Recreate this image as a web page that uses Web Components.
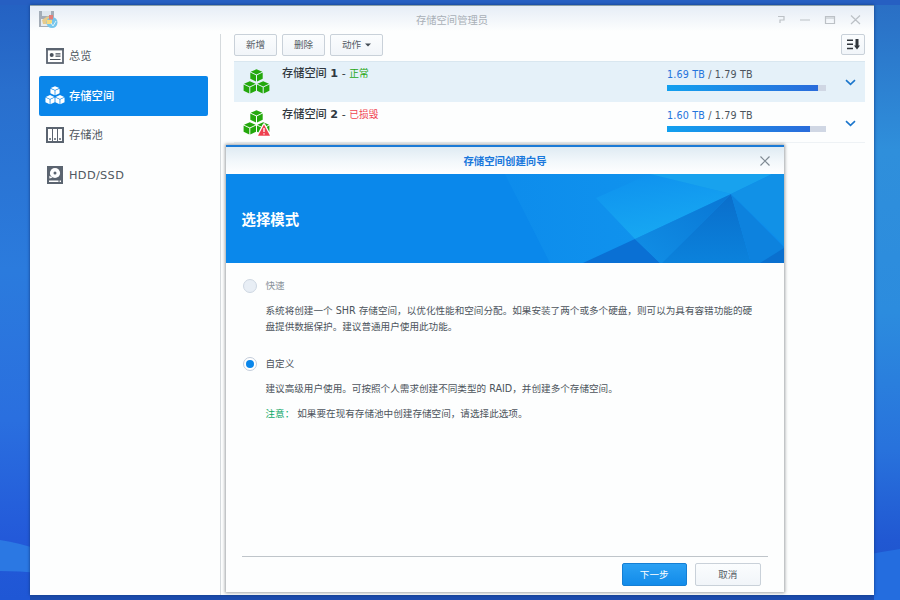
<!DOCTYPE html>
<html lang="zh-CN">
<head>
<meta charset="utf-8">
<title>存储空间管理员</title>
<style>
html,body{margin:0;height:100%;overflow:hidden}
body{font-family:"DejaVu Sans","Noto Sans CJK SC",sans-serif;font-size:9.6px;color:#4c545c;line-height:16px;white-space:nowrap}
</style>
</head>
<body>
<storage-desktop></storage-desktop>
<script>
function define(name, html){
  const t = document.createElement('template');
  t.innerHTML = html;
  customElements.define(name, class extends HTMLElement{
    constructor(){
      super();
      this.attachShadow({mode:'open'}).append(t.content.cloneNode(true));
    }
  });
}
const cube = 'd="M13.5 .2 19.3 2.7 13.5 5.4 7.7 2.7ZM7.3 3.6 13 6.2V12.6L7.3 9.8ZM19.7 3.6 14 6.2V12.6L19.7 9.8Z"';
const cubes = `<g fill="currentColor"><path ${cube}/><path transform="translate(-6.7 12)" ${cube}/><path transform="translate(6.7 12)" ${cube}/></g>`;

const icons = {
  overview:`<svg width="18" height="16" viewBox="0 0 18 16"><rect x="1" y="1" width="16" height="14" fill="#fff" stroke="#5b6470" stroke-width="1.8"/><path d="M0 1.2H18" stroke="#5b6470" stroke-width="2.4"/><circle cx="5.7" cy="7" r="2" fill="#4a525c"/><path d="M9.5 5.8H14.5M9.5 8.2H14.5M4 11.5H14.5" stroke="#4a525c" stroke-width="1.2"/></svg>`,
  volume:`<svg width="20" height="18.5" viewBox="0 0 27 25">${cubes}</svg>`,
  pool:`<svg width="18" height="16" viewBox="0 0 18 16"><path d="M0 0H18V16H0Z" fill="#5b6470"/><path d="M2 2H6V14H2ZM7 2H11V14H7ZM12 2H16V14H12Z" fill="#fff"/><path d="M4 11V13M9 11V13M14 11V13" stroke="#5b6470" stroke-width="1.5"/></svg>`,
  disk:`<svg width="18" height="18" viewBox="0 0 18 18"><path d="M1 0H17V18H1Z" fill="#5b6470"/><circle cx="9" cy="7" r="5.1" fill="#fff"/><circle cx="9" cy="7" r="1.5" fill="#5b6470"/><path d="M3.4 9.8 6.6 11.8 3.4 12.6Z" fill="#fff"/><path d="M3 15.2H12.5M13.6 15.2H15" stroke="#fff" stroke-width="1.6"/></svg>`
};
customElements.define('nav-item', class extends HTMLElement{
  constructor(){
    super();
    this.attachShadow({mode:'open'}).innerHTML = `<style>
:host{display:flex;align-items:center;height:39.8px;padding-left:6px;box-sizing:border-box;font-size:11.3px;border-radius:2px;color:#505861}
:host([active]){background:#0a86ea;color:#fff;font-weight:500}
.i{width:20px;display:flex;justify-content:center;margin-right:4px}
.t{padding-top:2px}
:host([icon=disk]) .t{letter-spacing:.35px;padding-top:1px}
svg{display:block}
</style><span class="i">${icons[this.getAttribute('icon')]||''}</span><span class="t"><slot></slot></span>`;
  }
});
define('tool-button', `<style>
:host{display:flex;align-items:center;justify-content:center;height:22px;box-sizing:border-box;border:1px solid #c9d1d9;border-radius:2px;background:linear-gradient(#fbfdfe,#f1f5f9);color:#555d66}
:host([primary]){background:linear-gradient(#2ba1f4,#128be9);border-color:#157fd4;color:#fff}
</style><slot></slot>`);

customElements.define('volume-row', class extends HTMLElement{
  constructor(){
    super();
    const bad = this.hasAttribute('damaged');
    this.attachShadow({mode:'open'}).innerHTML = `<style>
:host{display:flex;height:41px;box-sizing:border-box;border-top:1px solid transparent;border-bottom:1px solid #eef2f5;position:relative}
:host([selected]){background:#e5f1f9;border-color:#d9e7f0 #e5f1f9 #e5f1f9}
.i{width:27px;margin:7px 0 0 9px;color:#24a80c}
.i svg{display:block}
.name{margin:4px 0 0 12px;flex:1;font-size:11.2px;font-weight:500;color:#303840}
.name b{font-weight:700}
.s{font-size:9.7px;font-weight:400;color:#27a714}
.s.bad{color:#f0434f}
.use{width:159px;margin-top:5px;letter-spacing:.16px}
.use b{font-weight:400;color:#2374dc}
.bar{height:6px;margin-top:2px;background:#d0d7e4}
.bar i{display:block;height:6px;background:linear-gradient(90deg,#12a0ef,#2a6cdb)}
.a{margin:17px 9px 0 19px;width:11px}
.a svg{display:block}
.w{position:absolute;left:23px;top:20px}
</style>
<div class="i"><svg width="27" height="25" viewBox="0 0 27 25">${cubes}</svg></div>
${bad?'<svg class="w" width="14" height="14" viewBox="0 0 14 14"><path d="M7 1.4 13 12.8H1Z" fill="#ee404f" stroke="#fff" stroke-width="2.4" stroke-linejoin="round" paint-order="stroke"/><path d="M7 5V9M7 10.2V11.6" stroke="#fff" stroke-width="1.3"/></svg>':''}
<div class="name">存储空间 <b><slot name="num"></slot></b> - <span class="s ${bad?'bad':''}"><slot name="status"></slot></span></div>
<div class="use"><b><slot name="used"></slot></b> / 1.79 TB<div class="bar"><i style="width:${this.getAttribute('fill')}"></i></div></div>
<div class="a"><svg width="11" height="7" viewBox="0 0 11 7"><path d="M1 1.2 5.5 5.4 10 1.2" fill="none" stroke="#1b76cc" stroke-width="1.6"/></svg></div>`;
  }
});

customElements.define('mode-option', class extends HTMLElement{
  constructor(){
    super();
    this.attachShadow({mode:'open'}).innerHTML = `<style>
:host{display:grid;grid-template-columns:22px 1fr;color:#4c545c}
.r{width:14px;height:14px;box-sizing:border-box;border:1px solid #c3cddb;border-radius:50%;margin:1px 0 0 1px;background:#fff;display:flex;align-items:center;justify-content:center}
:host(:not([checked])) .r{background:#e8eef5;border-color:#ced7e2}
:host(:not([checked])) .l{color:#8b939b}
:host([checked]) .r::after{content:"";width:8px;height:8px;border-radius:50%;background:#0a86ea}
.l{padding-left:1.5px}
.d{grid-column:2;padding:9px 0 0 1.5px}
</style><span class="r"></span><span class="l"><slot name="label"></slot></span><div class="d"><slot></slot></div>`;
  }
});

define('create-wizard', `<style>
:host{display:flex;flex-direction:column;box-sizing:border-box;background:#fdfefe;border-top:2px solid #1a7ad6;box-shadow:0 0 3px 1px rgba(70,75,80,.5)}
header{height:27px;display:grid;grid-template-columns:40px 1fr 40px;align-items:center;text-align:center;background:linear-gradient(#dfebf3,#f3f8fb 55%,#fff);color:#1a78dc;font-weight:700;font-size:10.4px}
header svg{margin-left:16px;display:block}
.banner{height:89px;display:grid;background:#0b89ec}
.banner>*{grid-area:1/1}
h1{margin:0 0 0 15.5px;align-self:center;color:#fff;font-size:14.4px;line-height:20px;padding-top:2px}
main{flex:1;padding:14.5px 16px 0}
mode-option+mode-option{margin-top:21px}
.note{margin-top:9.5px}
.note b{font-weight:400;color:#11a868;margin-right:3px}
footer{margin:0 16px;border-top:1px solid #bfc5ca;height:36px;display:flex;justify-content:flex-end;gap:8px;padding:6px 7.5px 0 0;box-sizing:border-box}
footer tool-button{width:65.5px;height:23px}
</style>
<header><span></span><span>存储空间创建向导</span><svg width="10" height="10" viewBox="0 0 10 10"><path d="M.5.5 9.5 9.5M9.5.5.5 9.5" stroke="#7e8992" stroke-width="1.2"/></svg></header>
<div class="banner"><svg width="558" height="89" viewBox="0 0 558 89">
<defs><linearGradient id="a" x1="0" x2="1"><stop offset="0" stop-color="#0b89ec"/><stop offset="1" stop-color="#18a5f2"/></linearGradient>
<linearGradient id="e" x1="0" y1="0" x2=".35" y2="1"><stop offset="0" stop-color="#0e90ee"/><stop offset="1" stop-color="#17a8f2"/></linearGradient>
<linearGradient id="b" x1="1" y1="0" x2="0" y2="1"><stop offset="0" stop-color="#0976d4"/><stop offset="1" stop-color="#118fe6"/></linearGradient>
<linearGradient id="c" x1="0" y1="0" x2="0" y2="1"><stop offset="0" stop-color="#0a6ecb"/><stop offset="1" stop-color="#0b82dc"/></linearGradient></defs>
<path d="M0 0H558V89H0Z" fill="#0a88eb"/>
<path d="M279 0H558V89H324Z" fill="#0e8eec"/>
<path d="M279 0H424L505 20 357 89H324Z" fill="url(#a)" opacity=".35"/>
<path d="M370 24 424 0 505 20 409 65Z" fill="url(#e)"/>
<path d="M424 0H546L505 20Z" fill="#18a2ee"/>
<path d="M357 89 409 65 434 89Z" fill="#0a70d4"/>
<path d="M409 65 505 20 436 89H434Z" fill="url(#b)"/>
<path d="M436 89 505 20 525 89Z" fill="url(#c)"/>
<path d="M505 20 558 73V89H525Z" fill="#0d82de"/>
<path d="M505 20 546 0H558V71Z" fill="#1191e7"/>
<path d="M534 89 558 74V89Z" fill="#0a70cf"/></svg>
<h1>选择模式</h1></div>
<main>
<mode-option><span slot="label">快速</span>系统将创建一个 SHR 存储空间，以优化性能和空间分配。如果安装了两个或多个硬盘，则可以为具有容错功能的硬<br>盘提供数据保护。建议普通用户使用此功能。</mode-option>
<mode-option checked><span slot="label">自定义</span>建议高级用户使用。可按照个人需求创建不同类型的 RAID，并创建多个存储空间。<div class="note"><b>注意：</b>如果要在现有存储池中创建存储空间，请选择此选项。</div></mode-option>
</main>
<footer><tool-button primary>下一步</tool-button><tool-button>取消</tool-button></footer>`);

define('storage-window', `<style>
:host{display:flex;flex-direction:column;box-sizing:border-box;background:#fdfefe;border-top:1px solid #8ba0a8;box-shadow:0 0 3px 0 #123a80}
header{height:28px;display:grid;grid-template-columns:104px 1fr 104px;align-items:center;text-align:center;color:#a9b0b7;background:linear-gradient(#e6edf6,#fdfefe 90%)}
header .logo{margin-left:9px;display:block;opacity:.85}
header .c{margin-left:8px;display:block}
.title{font-size:10.3px}
.body{flex:1;display:grid;grid-template-columns:191px 1fr}
nav{border-right:1px solid #d5dadd;padding:2px 12px 0 9px}
section{padding:0 9px 0 13px}
.tools{display:flex;gap:5px;height:27px}
.tools tool-button{width:43px}
.tools .act{width:53px;gap:4px}
.tools .sort{width:24px;height:21px;margin-left:auto}
</style>
<header><svg class="logo" width="20" height="18" viewBox="0 0 20 18"><path d="M0 0H15V16H0Z" fill="#96a0ac"/><path d="M3 0H12V5H3Z" fill="#dce5ec"/><path d="M2 8H13V15H2Z" fill="#e4eaf0"/><path d="M3 9 8 5.5 14 6 12 13H4Z" fill="#e5c479"/><circle cx="13" cy="11.5" r="5.5" fill="#61bde9"/><path d="M10 4H14V8.5H10Z" fill="#e06a62"/><path d="M8 9H13V13H8Z" fill="#f6d56d"/><path d="M12 12 14 15 17 10" fill="none" stroke="#d9f3fc"/></svg>
<span class="title">存储空间管理员</span>
<svg class="c" width="88" height="12" viewBox="0 0 88 12"><path d="M-1 2.5H6V6H2V9M22 6H32M47.500 2.500H56.500V9.500H47.500ZM47.500 4H56.500M73 1.500 82 10M82 1.500 73 10" stroke="#bcc1c6" stroke-width="1.2" fill="none"/></svg></header>
<div class="body">
<nav><nav-item icon="overview">总览</nav-item><nav-item icon="volume" active>存储空间</nav-item><nav-item icon="pool">存储池</nav-item><nav-item icon="disk">HDD/SSD</nav-item></nav>
<section><div class="tools"><tool-button>新增</tool-button><tool-button>删除</tool-button><tool-button class="act">动作<svg width="6" height="4" viewBox="0 0 6 4"><path d="M0 .5H6L3 3.5Z" fill="#444c55"/></svg></tool-button>
<tool-button class="sort"><svg width="13" height="11" viewBox="0 0 13 11"><path d="M0 1.2H6M0 5.3H6M0 9.4H6" stroke="#30363c" stroke-width="1.5"/><path d="M8.5 0H11.5V6.5H13L10 10.5 7 6.5H8.5Z" fill="#30363c"/></svg></tool-button></div>
<volume-row selected fill="94.8%"><span slot="num">1</span><span slot="status">正常</span><span slot="used">1.69 TB</span></volume-row>
<volume-row damaged fill="89.8%"><span slot="num">2</span><span slot="status">已损毁</span><span slot="used">1.60 TB</span></volume-row>
</section></div>`);

define('storage-desktop', `<style>
:host{display:block;position:relative;width:900px;height:600px;overflow:hidden;background:#2161c9}
.bg{position:absolute;inset:0}
storage-window{position:absolute;left:30px;top:5px;width:844px;height:590px}
create-wizard{position:absolute;left:226px;top:145px;width:558px;height:447px}
</style>
<svg class="bg" width="900" height="600" viewBox="0 0 900 600"><defs>
<linearGradient id="l" x1="0" y1="0" x2="0" y2="1"><stop offset="0" stop-color="#2461c2"/><stop offset=".15" stop-color="#296fcd"/><stop offset=".45" stop-color="#2b7bdd"/><stop offset=".7" stop-color="#2a6fdf"/><stop offset=".9" stop-color="#2359d9"/><stop offset="1" stop-color="#1f57d5"/></linearGradient>
<linearGradient id="r" x1="0" y1="0" x2="0" y2="1"><stop offset="0" stop-color="#2a6ec4"/><stop offset=".25" stop-color="#2f8fdb"/><stop offset=".52" stop-color="#2c8cde"/><stop offset=".75" stop-color="#2872dc"/><stop offset=".9" stop-color="#2158d2"/><stop offset="1" stop-color="#1d52c8"/></linearGradient></defs>
<path d="M0 0H450V600H0Z" fill="url(#l)"/><path d="M450 0H900V600H450Z" fill="url(#r)"/>
<path d="M0 0H900V5H0Z" fill="#265fc2"/>
<path d="M0 540Q20 543 40 550V573Q20 571 0 571Z" fill="#2b78e3"/><path d="M860 556Q880 552 900 549V600H860Z" fill="#246ddf"/>
<path d="M30 595H874V600H30Z" fill="#1c4cae"/></svg>
<storage-window></storage-window><create-wizard></create-wizard>`);
</script>
</body>
</html>
